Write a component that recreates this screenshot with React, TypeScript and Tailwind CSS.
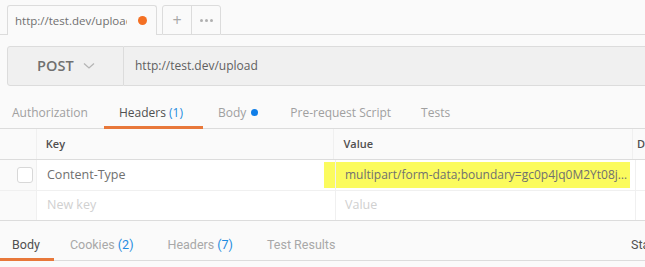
import React from "react";

export default function App() {
  return (
    <div
      className="w-[645px] h-[267px] overflow-hidden bg-[#fafafa] text-[#808080] relative"
      style={{ fontFamily: '"Open Sans", "Liberation Sans", sans-serif' }}
    >
      {/* Top tab bar */}
      <div className="flex items-end h-[35px] pt-[5px] bg-[#fafafa]">
        <div className="w-[7px] h-full border-b border-[#dcdcdc]" />
        <div className="w-[150px] h-full border border-b-0 border-[#dcdcdc] rounded-t-[3px] bg-[#fafafa] flex items-center pl-[7px] pr-[9px]">
          <span className="text-[11.5px] text-[#707070] overflow-hidden whitespace-nowrap w-[112px]">http://test.dev/upload</span>
          <span className="ml-auto w-[9px] h-[9px] rounded-full bg-[#f47023]" />
        </div>
        <div className="w-[5px] h-full border-b border-[#dcdcdc]" />
        <div className="w-[59px] h-full border border-[#dcdcdc] rounded-t-[3px] flex">
          <div className="w-[29px] h-full border-r border-[#dcdcdc] flex items-center justify-center text-[#a8a8a8] text-[16px] leading-none">+</div>
          <div className="flex-1 flex items-center justify-center gap-[2px]">
            <span className="w-[3px] h-[3px] rounded-full bg-[#b0b0b0]" />
            <span className="w-[3px] h-[3px] rounded-full bg-[#b0b0b0]" />
            <span className="w-[3px] h-[3px] rounded-full bg-[#b0b0b0]" />
          </div>
        </div>
        <div className="flex-1 h-full border-b border-[#dcdcdc]" />
      </div>

      {/* Request bar */}
      <div className="flex mt-[11px] pl-[7px] h-[40px]">
        <div className="w-[117px] h-full bg-[#f0f0f0] border border-[#dcdcdc] rounded-l-[3px] flex items-center pl-[29px]">
          <span className="text-[14.5px] font-semibold text-[#707070] tracking-[0.1px]">POST</span>
          <svg className="ml-[9px]" width="12" height="8" viewBox="0 0 12 8" fill="none">
            <path d="M1 1.5 L6 6 L11 1.5" stroke="#b5b5b5" strokeWidth="1.3" />
          </svg>
        </div>
        <div className="flex-1 h-full bg-[#f0f0f0] border-y border-[#dcdcdc] flex items-center pl-[11px]">
          <span className="text-[12px] text-[#606060]">http://test.dev/upload</span>
        </div>
      </div>

      {/* Request tabs */}
      <div className="flex mt-[11px] h-[32px] border-b border-[#dcdcdc] text-[12px]">
        <div className="pl-[12px] pr-[16px] flex items-center text-[#a0a0a0]">Authorization</div>
        <div className="relative pl-[15px] pr-[20px] flex items-center text-[#505050]">
          <span>Headers <span className="text-[#1f8ce0]">(1)</span></span>
          <span className="absolute left-0 right-0 bottom-[-1px] h-[3px] bg-[#e8783a]" />
        </div>
        <div className="pl-[15px] pr-[17px] flex items-center text-[#a0a0a0]">
          Body
          <span className="ml-[5px] w-[7px] h-[7px] rounded-full bg-[#0f7ee8]" />
        </div>
        <div className="px-[15px] flex items-center text-[#a0a0a0]">Pre-request Script</div>
        <div className="px-[15px] flex items-center text-[#a0a0a0]">Tests</div>
      </div>

      {/* Table */}
      <div className="flex flex-col">
        <div className="flex h-[31px] border-b border-[#dcdcdc] bg-[#fafafa]">
          <div className="w-[37px] border-r border-[#f0f0f0]" />
          <div className="w-[299px] border-r border-[#f0f0f0] flex items-center pl-[9px] text-[11px] font-semibold text-[#505050]">Key</div>
          <div className="w-[300px] border-r border-[#f0f0f0] flex items-center pl-[9px] text-[11px] font-semibold text-[#505050]">Value</div>
          <div className="flex-1 flex items-center pl-[4px] text-[11px] font-semibold text-[#505050]">D</div>
        </div>
        <div className="flex h-[31px] border-b border-[#f0f0f0] bg-white">
          <div className="w-[37px] bg-[#fafafa] border-r border-[#f0f0f0] flex items-center justify-end pr-[3px]">
            <span className="w-[16px] h-[16px] rounded-[3px] border border-[#d8d8d8] bg-white" />
          </div>
          <div className="w-[287px] flex items-center pl-[10px] text-[12.5px] text-[#707070]">Content-Type</div>
          <div className="w-[12px] h-full py-[2px] border-r border-[#f0f0f0]">
            <div className="h-full bg-[#fbfb5e]" />
          </div>
          <div className="w-[300px] h-full py-[2px] border-r border-[#f0f0f0]">
            <div className="h-full w-[294px] bg-[#fbfb5e] flex items-center pl-[9px] text-[12px] text-[#707070] whitespace-nowrap overflow-hidden">
              multipart/form-data;boundary=gc0p4Jq0M2Yt08j…
            </div>
          </div>
          <div className="flex-1" />
        </div>
        <div className="flex h-[30px] border-b border-[#dcdcdc] bg-white">
          <div className="w-[37px] bg-[#fafafa] border-r border-[#f0f0f0]" />
          <div className="w-[299px] border-r border-[#f0f0f0] flex items-center pl-[10px] text-[12.5px] text-[#d0d0d0]">New key</div>
          <div className="w-[300px] border-r border-[#f0f0f0] flex items-center pl-[9px] text-[12.5px] text-[#d0d0d0]">Value</div>
          <div className="flex-1" />
        </div>
      </div>

      {/* Response tabs */}
      <div
        className="flex mt-[9px] h-[31px] border-b border-[#dcdcdc] text-[12.5px]"
        style={{ fontFamily: 'Roboto, "Liberation Sans", sans-serif' }}
      >
        <div className="relative pl-[12px] pr-[14px] flex items-center text-[#505050]">
          Body
          <span className="absolute left-0 right-0 bottom-[-1px] h-[3px] bg-[#e8783a]" />
        </div>
        <div className="pl-[16px] pr-[17px] flex items-center text-[#a8a8a8]">
          Cookies&nbsp;<span className="text-[#1f8ce0]">(2)</span>
        </div>
        <div className="px-[17px] flex items-center text-[#a8a8a8]">
          Headers&nbsp;<span className="text-[#1f8ce0]">(7)</span>
        </div>
        <div className="px-[17px] flex items-center text-[#a8a8a8]">Test Results</div>
        <div className="ml-auto flex items-center text-[#505050] w-[14px] overflow-hidden whitespace-nowrap">Status</div>
      </div>
    </div>
  );
}
